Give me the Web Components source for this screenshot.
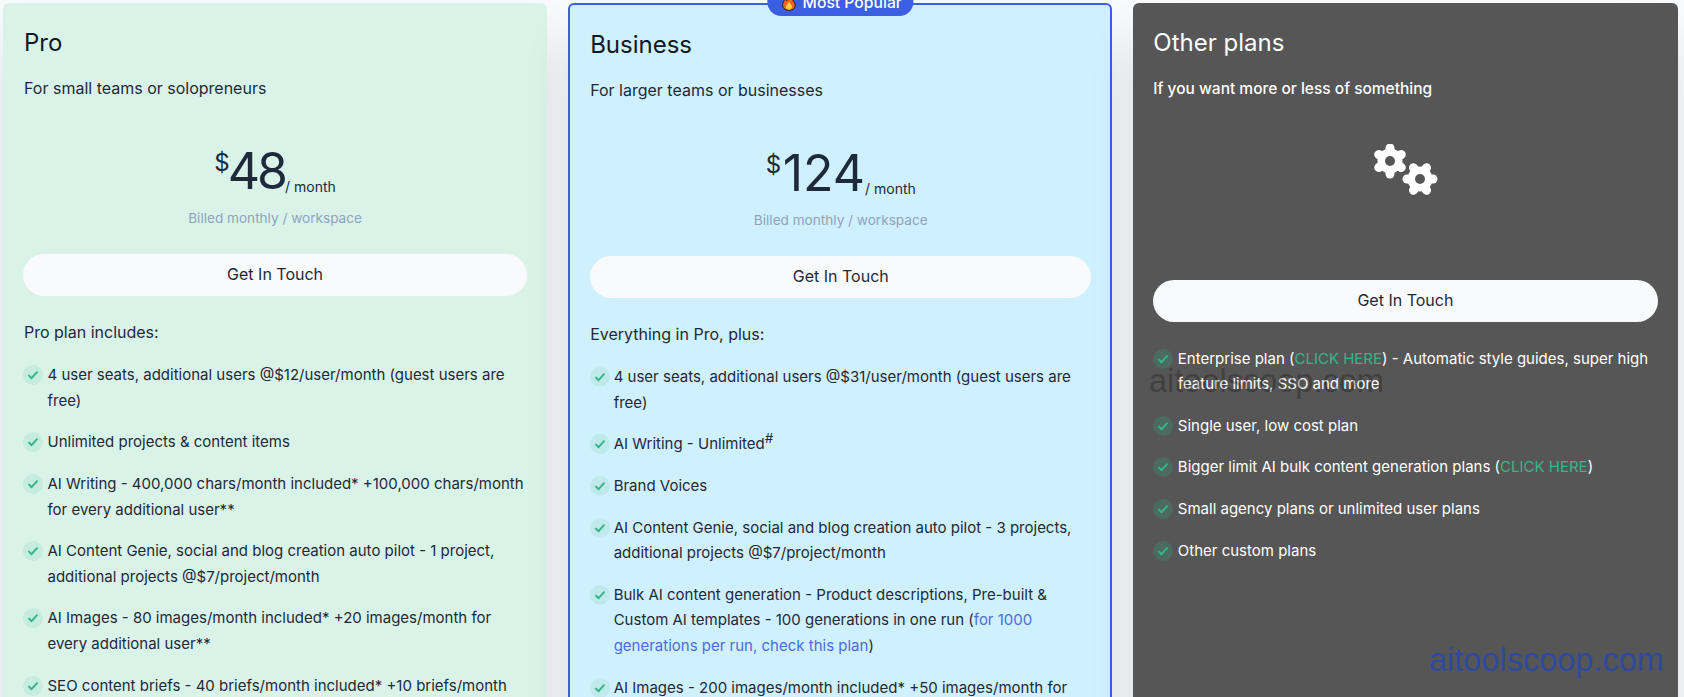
<!doctype html>
<html>
<head>
<meta charset="utf-8">
<title>Pricing</title>
<style>
  html, body { margin: 0; height: 697px; overflow: hidden; background: #f9fafb; }
  body { font-family: Inter, "Liberation Sans", sans-serif; }
  a { text-decoration: none; }
</style>
</head>
<body>
<pricing-grid>
  <plan-card name="Pro" desc="For small teams or solopreneurs" lead="Pro plan includes:" theme="pro">
    <plan-price slot="head" amount="48" tracking="-3px" cur-gap="-2px"></plan-price>
    <check-item>4 user seats, additional users @$12/user/month (guest users are free)</check-item>
    <check-item>Unlimited projects &amp; content items</check-item>
    <check-item>AI Writing - 400,000 chars/month included* +100,000 chars/month for every additional user**</check-item>
    <check-item>AI Content Genie, social and blog creation auto pilot - 1 project, additional projects @$7/project/month</check-item>
    <check-item>AI Images - 80 images/month included* +20 images/month for every additional user**</check-item>
    <check-item>SEO content briefs - 40 briefs/month included* +10 briefs/month for every additional user**</check-item>
  </plan-card>
  <plan-card name="Business" desc="For larger teams or businesses" lead="Everything in Pro, plus:" theme="business">
    <popular-badge slot="badge">Most Popular</popular-badge>
    <plan-price slot="head" amount="124" tracking="0" cur-gap="1.5px"></plan-price>
    <check-item>4 user seats, additional users @$31/user/month (guest users are free)</check-item>
    <check-item>AI Writing - Unlimited<sup style="font-size:13px;line-height:0;font-style:italic">#</sup></check-item>
    <check-item>Brand Voices</check-item>
    <check-item>AI Content Genie, social and blog creation auto pilot - 3 projects, additional projects @$7/project/month</check-item>
    <check-item>Bulk AI content generation - Product descriptions, Pre-built &amp; Custom AI templates - 100 generations in one run (<a href="#" style="color:#4f6ae0">for 1000 generations per run, check this plan</a>)</check-item>
    <check-item>AI Images - 200 images/month included* +50 images/month for every additional user**</check-item>
  </plan-card>
  <plan-card name="Other plans" desc="If you want more or less of something" theme="other">
    <gear-icon slot="head"></gear-icon>
    <check-item>Enterprise plan (<a href="#" style="color:#36b58b">CLICK HERE</a>) - Automatic style guides, super high feature limits, SSO and more</check-item>
    <check-item>Single user, low cost plan</check-item>
    <check-item>Bigger limit AI bulk content generation plans (<a href="#" style="color:#36b58b">CLICK HERE</a>)</check-item>
    <check-item>Small agency plans or unlimited user plans</check-item>
    <check-item>Other custom plans</check-item>
  </plan-card>
</pricing-grid>
<water-mark style="left:1149px;top:362px;color:rgba(0,0,0,.27)"></water-mark>
<water-mark style="left:1429px;top:641px;color:#2f4a9c"></water-mark>

<script>
// grid holding the three plans
class PricingGrid extends HTMLElement {
  constructor() {
    super();
    this.attachShadow({ mode: 'open' }).innerHTML = `
      <style>
        :host { display: grid; grid-template-columns: repeat(3, minmax(0, 1fr)); gap: 21px; padding: 3px 6.5px 0 3px; height: 900px; }
      </style>
      <slot></slot>`;
  }
}

const THEMES = {
  pro: 'background:#d9f3e9;color:#1f2937;--title:#111827;--tick-bg:#c6ebdf;--inset:1px',
  business: 'background:#cff0fe;color:#1f2937;--title:#111827;--tick-bg:#bfe9ea;--tick-gap:3.5px;padding-right:19px!important;border:2px solid #3b5fe0',
  other: 'background:#565656;color:#fff;--title:#fff;--tick-bg:#4b6b60;--desc-weight:500;--desc-size:15.5px'
};

class PlanCard extends HTMLElement {
  connectedCallback() {
    if (this.shadowRoot) return;
    const lead = this.getAttribute('lead');
    this.attachShadow({ mode: 'open' }).innerHTML = `
      <style>
        :host { display: block; box-sizing: border-box; position: relative; padding: 24px 20px 0; border-radius: 6px;
                box-shadow: 0 25px 50px -12px rgba(0,20,40,.17); font-size: 16px; line-height: 25.6px; ${THEMES[this.getAttribute('theme')]} }
        h3 { margin: 0 var(--inset, 0); font-size: 24px; line-height: 32px; font-weight: 400; color: var(--title); }
        .desc { margin: 17px var(--inset, 0) 0; font-weight: var(--desc-weight, 400); font-size: var(--desc-size, 16px); }
        .lead { margin: 24px var(--inset, 0) 17px; }
        .list { display: flex; flex-direction: column; gap: 16px; font-size: 15px; }
      </style>
      <slot name="badge"></slot>
      <h3></h3>
      <p class="desc"></p>
      <slot name="head"></slot>
      <cta-button>Get In Touch</cta-button>
      ${lead ? '<p class="lead"></p>' : '<div style="height:24px"></div>'}
      <div class="list"><slot></slot></div>`;
    this.shadowRoot.querySelector('h3').textContent = this.getAttribute('name');
    this.shadowRoot.querySelector('.desc').textContent = this.getAttribute('desc');
    if (lead) this.shadowRoot.querySelector('.lead').textContent = lead;
  }
}

class PlanPrice extends HTMLElement {
  connectedCallback() {
    if (this.shadowRoot) return;
    this.attachShadow({ mode: 'open' }).innerHTML = `
      <style>
        :host { display: block; text-align: center; margin-top: 40px; }
        .row { display: flex; justify-content: center; align-items: flex-end; height: 58px; color: #1e293b; }
        .cur { font-size: 24px; line-height: 30px; align-self: flex-start; margin-top: 6px; }
        .num { font-size: 50px; line-height: 58px; }
        .per { font-size: 14px; line-height: 20px; margin-bottom: 3px; }
        .note { margin-top: 8px; font-size: 13.6px; line-height: 20px; color: #8fa3bf; }
        .gap { height: 26px; }
      </style>
      <div class="row"><span class="cur">$</span><span class="num"></span><span class="per">/ month</span></div>
      <div class="note">Billed monthly / workspace</div>
      <div class="gap"></div>`;
    const num = this.shadowRoot.querySelector('.num');
    num.textContent = this.getAttribute('amount');
    num.style.letterSpacing = this.getAttribute('tracking') || '0';
    this.shadowRoot.querySelector('.cur').style.marginRight = this.getAttribute('cur-gap') || '0';
  }
}

class CtaButton extends HTMLElement {
  constructor() {
    super();
    this.attachShadow({ mode: 'open' }).innerHTML = `
      <style>
        :host { display: flex; align-items: center; justify-content: center; height: 42px; border-radius: 999px;
                background: #f9fafb; color: #1f2937; font-size: 16px; }
      </style>
      <slot></slot>`;
  }
}

class CheckItem extends HTMLElement {
  constructor() {
    super();
    this.attachShadow({ mode: 'open' }).innerHTML = `
      <style>
        :host { display: flex; gap: var(--tick-gap, 4.5px); }
        .tick { flex: none; width: 20px; height: 20px; margin-top: 3px; border-radius: 50%; background: var(--tick-bg);
                display: flex; align-items: center; justify-content: center; }
        svg { width: 12px; height: 12px; fill: none; stroke: #36b58b; stroke-width: 2; stroke-linecap: round; stroke-linejoin: round; }
      </style>
      <span class="tick"><svg viewBox="0 0 12 12"><path d="M2 6.6 4.6 9.2 10 3.2"/></svg></span>
      <div><slot></slot></div>`;
  }
}

class PopularBadge extends HTMLElement {
  constructor() {
    super();
    this.attachShadow({ mode: 'open' }).innerHTML = `
      <style>
        :host { position: absolute; top: -19.5px; left: 50%; transform: translateX(-50%); display: flex; align-items: center; gap: 6px;
                height: 30px; padding: 4px 11px 0 14px; border-radius: 14px; background: #3b5fe0; color: #fff; font-weight: 500; font-size: 15.7px;
                white-space: nowrap; box-sizing: border-box; }
        svg { width: 15px; height: 17px; }
      </style>
      <svg viewBox="0 0 15 17"><path d="M7.5 .8C8 4 12.2 5.6 13.6 9.6 14.8 13.4 11.6 16.4 7.5 16.4 3.6 16.4 .4 13.6 1.4 9.4 2 7.4 3.4 6 4 4.6 4.8 5.4 5.2 6 5.4 6.8 6.8 5 7.4 3 7.5 .8Z" fill="#f4641e" stroke="#222" stroke-width="1"/><path d="M7.6 7.6C8 9.6 10.6 10.6 10.6 13 10.6 14.8 9.2 15.6 7.5 15.6 5.8 15.6 4.4 14.6 4.6 12.8 4.8 11 7 10 7.6 7.6Z" fill="#ffd23c"/></svg>
      <slot></slot>`;
  }
}

class GearIcon extends HTMLElement {
  constructor() {
    super();
    const gear = (cx, cy, start) => {
      const teeth = [0, 60, 120].map(a => `<line x1="-13" x2="13" transform="rotate(${start + a})"/>`).join('');
      return `<g transform="translate(${cx} ${cy})"><g stroke="#fff" stroke-width="9" stroke-linecap="round">${teeth}</g><circle r="12.5" fill="#fff"/><circle r="5" fill="#565656"/></g>`;
    };
    this.attachShadow({ mode: 'open' }).innerHTML = `
      <style>
        :host { display: flex; justify-content: center; padding: 42px 0 84px; }
        svg { width: 68px; height: 52px; display: block; margin-left: 3px; }
      </style>
      <svg viewBox="0 0 68 52">${gear(17, 17, 90)}${gear(47, 35, 0)}</svg>`;
  }
}

class WaterMark extends HTMLElement {
  constructor() {
    super();
    this.attachShadow({ mode: 'open' }).innerHTML = `
      <style>
        :host { position: absolute; font: 32.5px/38px "Liberation Sans", Arial, sans-serif; white-space: nowrap; }
      </style>aitoolscoop.com`;
  }
}

customElements.define('pricing-grid', PricingGrid);
customElements.define('plan-card', PlanCard);
customElements.define('plan-price', PlanPrice);
customElements.define('cta-button', CtaButton);
customElements.define('check-item', CheckItem);
customElements.define('popular-badge', PopularBadge);
customElements.define('gear-icon', GearIcon);
customElements.define('water-mark', WaterMark);
</script>
</body>
</html>
